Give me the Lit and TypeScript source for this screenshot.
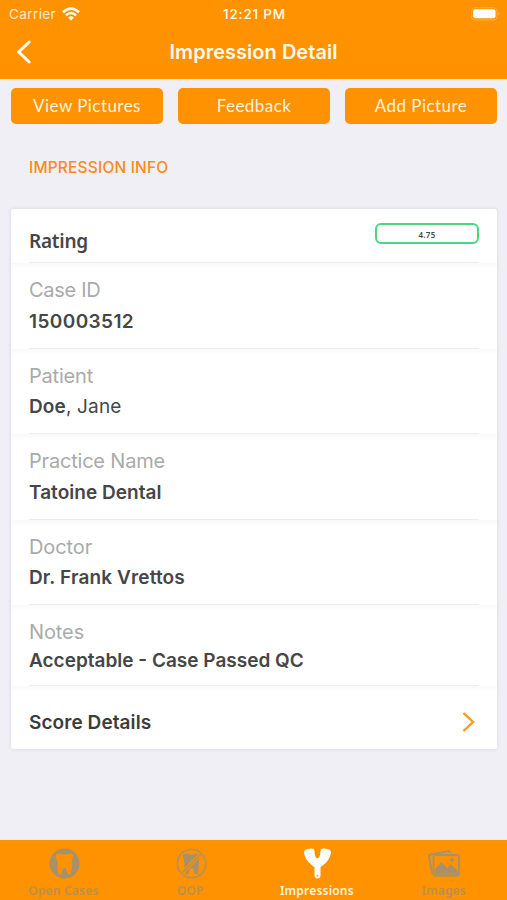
import { LitElement, html, css, svg } from "lit";
import { customElement } from "lit/decorators.js";

const toothPath =
  "M7 5.8C9 4.4 12 6 15 6S21 4.4 23 5.8C24.4 8 22.4 11 22.2 14.5C22.4 18 22 22.5 21 25.8H18.2C17.4 23.5 17.6 19.6 15.1 19.6S12.8 23.5 12 25.8H9.2C8.2 22.5 7.8 18 8 14.5C7.8 11 5.6 8 7 5.8Z";

const icons = {
  cases: svg`<circle cx="15" cy="15" r="15" fill="#a8906a"/><path d=${toothPath} fill="#ff9200"/>`,
  oop: svg`<circle cx="15" cy="15" r="14.2" fill="none" stroke="#b79155" stroke-width="1.7"/>
    <path d=${toothPath} fill="#a8906a"/>
    <path d="M25.4 4.6L4.6 25.4" stroke="#ff9200" stroke-width="3.6"/>
    <path d="M25.4 4.6L4.6 25.4" stroke="#b79155" stroke-width="1.6"/>`,
  impressions: svg`<path fill="#fff" d="M5 .6C7.4-.1 10.4-.2 11.4 .6C12.6 2.6 11.6 9.8 15 9.8S17.4 2.6 18.6 .6C19.6-.2 22.6-.1 25 .6C27.6 1.2 28.8 2.4 28.4 4.6C27.4 10.4 23.4 15.8 18 18.4V27C18 31 12 31 12 27V18.4C6.6 15.8 2.6 10.4 1.6 4.6C1.2 2.4 2.4 1.2 5 .6Z"/>
    <circle cx="15" cy="27.2" r="1.1" fill="#ffb550"/>`,
  images: svg`<g fill="none" stroke="#a8906a" stroke-width="1.8" stroke-linejoin="round">
    <path d="M4.4 25.5L.9 8.3Q.7 6.4 2.5 6L20 2.6Q21.8 2.4 22.6 4.6"/>
    <rect x="5.5" y="6.5" width="25.4" height="20.5" rx="1.5"/></g>
    <path fill="#a8906a" d="M7 26V20.5L13.5 13.5L19 19.5L23 16L29.5 22V26Z"/><circle cx="24" cy="11.5" r="1.9" fill="#a8906a"/>`,
};

@customElement("app-root")
export class AppRoot extends LitElement {
  static styles = css`
    :host {
      display: flex;
      flex-direction: column;
      box-sizing: border-box;
      height: 900px;
      background: #f0eff5;
      font-family: Inter, "Liberation Sans", sans-serif;
      color: #464646;
      overflow: hidden;
    }
    svg { display: block; }
    header { height: 79px; background: #ff9200; color: #fffaf0; flex: none; }
    .status {
      display: grid;
      grid-template-columns: 1fr auto 1fr;
      align-items: center;
      height: 27px;
      padding: 0 7px 0 9px;
      font-size: 13.5px;
    }
    .carrier { display: flex; align-items: center; gap: 6px; letter-spacing: 0.4px; color: #ffe9c6; }
    .time { font-weight: 500; letter-spacing: 0.8px; }
    .battery { justify-self: end; }
    .nav {
      display: grid;
      grid-template-columns: 40px 1fr 40px;
      align-items: center;
      height: 50px;
      padding: 0 15px;
    }
    .title { text-align: center; font-size: 20px; font-weight: 600; letter-spacing: 0.03px; }
    .actions {
      display: grid;
      grid-template-columns: repeat(3, 1fr);
      gap: 15px;
      padding: 9px 10px 0 11px;
      flex: none;
    }
    .action {
      height: 36px;
      border-radius: 5px;
      background: #ff9200;
      color: #fff3dc;
      text-align: center;
      font: 17px/35px Lato, sans-serif;
      letter-spacing: 0.45px;
    }
    .section {
      flex: none;
      height: 85px;
      padding: 34px 29px 0;
      box-sizing: border-box;
      line-height: 20px;
      font-size: 15.5px;
      font-weight: 500;
      letter-spacing: 0.18px;
      color: #f98a1c;
    }
    .card {
      flex: none;
      margin: 0 10px 0 11px;
      border-radius: 3px;
      background: #fff;
      box-shadow: 0 0 4px rgba(0, 0, 0, 0.1);
    }
    .row {
      display: flex;
      flex-direction: column;
      box-sizing: border-box;
      height: 85.5px;
      padding: 15px 18px 0;
      line-height: 25px;
      background: linear-gradient(#f9f9f9, #fff 6px);
    }
    .row::after { content: ""; height: 1px; margin-top: auto; background: #ededef; }
    .label { font-size: 20px; color: #aaa; }
    .value { margin-top: 5.5px; font-size: 19px; font-weight: 600; }
    .light { font-weight: 400; }
    .notes { height: 81px; }
    .notes .value { margin-top: 2.5px; }
    .rating { height: 54px; padding-top: 14px; background: none; }
    .line { display: flex; justify-content: space-between; }
    .name { font: 600 19px/36px "Noto Sans", sans-serif; letter-spacing: -0.25px; }
    .badge {
      box-sizing: border-box;
      width: 104px;
      height: 21px;
      border: 2px solid #4cd581;
      border-radius: 6px;
      text-align: center;
      font: 600 8px/20px "Noto Sans", sans-serif;
      letter-spacing: 0.3px;
    }
    .score {
      height: 63px;
      flex-direction: row;
      align-items: center;
      justify-content: space-between;
      padding: 9px 22px 0 18px;
      font-size: 19px;
      font-weight: 600;
      letter-spacing: 0.08px;
      color: #3c3c3c;
      border-radius: 3px;
    }
    .score::after { display: none; }
    .tabs {
      display: grid;
      grid-template-columns: repeat(4, 1fr);
      box-sizing: border-box;
      height: 60px;
      margin-top: auto;
      padding-top: 8px;
      background: #ff9200;
    }
    .tab {
      display: flex;
      flex-direction: column;
      align-items: center;
      gap: 3px;
      color: #bb904b;
      font: 600 12px/17px "Noto Sans", sans-serif;
      letter-spacing: 0.2px;
    }
    .tab svg { margin-left: 1px; }
    .active { color: #fff3dc; }
  `;

  private field(label: string, value: unknown, tracking: number[], extra = "") {
    return html`<div class="row ${extra}">
      <span class="label" style="letter-spacing:${tracking[0]}px">${label}</span>
      <span class="value" style="letter-spacing:${tracking[1]}px">${value}</span>
    </div>`;
  }

  private tab(name: string, icon: unknown, box: string, active = false) {
    return html`<div class="tab ${active ? "active" : ""}">
      <svg width="32" height="31" viewBox=${box}>${icon}</svg><span>${name}</span>
    </div>`;
  }

  render() {
    return html`
      <header>
        <div class="status">
          <div class="carrier">
            Carrier
            <svg width="18" height="14" viewBox="0 0 18 14" fill="none" stroke="#fffaf0" stroke-width="2.5">
              <path d="M1 5.2Q9-2 17 5.2M3.9 8.3Q9 3.8 14.1 8.3" />
              <path d="M6 10.4Q9 8 12 10.4L9 13.6Z" fill="#fffaf0" stroke="none" />
            </svg>
          </div>
          <div class="time">12:21 PM</div>
          <svg class="battery" width="29" height="14" viewBox="0 0 29 14">
            <rect x="0.6" y="0.6" width="25.5" height="12.4" rx="3.6" fill="none" stroke="#ffb04a" />
            <rect x="2.2" y="2.3" width="22.3" height="9" rx="2" fill="#fff" />
            <path d="M27.4 4.5Q29.4 6.8 27.4 9Z" fill="#ffb04a" />
          </svg>
        </div>
        <div class="nav">
          <svg width="18" height="26" viewBox="0 0 18 26" fill="none" stroke="#fffaf0" stroke-width="3" stroke-linecap="round">
            <path d="M14.2 3L3.8 13L14.2 23" />
          </svg>
          <div class="title">Impression Detail</div>
        </div>
      </header>
      <div class="actions">
        <div class="action">View Pictures</div>
        <div class="action">Feedback</div>
        <div class="action">Add Picture</div>
      </div>
      <div class="section">IMPRESSION INFO</div>
      <div class="card">
        <div class="row rating">
          <div class="line"><span class="name">Rating</span><span class="badge">4.75</span></div>
        </div>
        ${this.field("Case ID", "150003512", [-0.3, 0.4])}
        ${this.field("Patient", html`Doe<span class="light">, Jane</span>`, [-0.2, 0.15])}
        ${this.field("Practice Name", "Tatoine Dental", [-0.2, 0.03])}
        ${this.field("Doctor", "Dr. Frank Vrettos", [-0.1, 0.13])}
        ${this.field("Notes", "Acceptable - Case Passed QC", [-0.1, 0], "notes")}
        <div class="row score">
          <span>Score Details</span>
          <svg width="13" height="22" viewBox="0 0 13 22" fill="none" stroke="#f79a22" stroke-width="2.4">
            <path d="M1.5 2L11 11L1.5 20" />
          </svg>
        </div>
      </div>
      <div class="tabs">
        ${this.tab("Open Cases", icons.cases, "-1.5 -0.5 32 31")}
        ${this.tab("OOP", icons.oop, "-1.5 -0.5 32 31")}
        ${this.tab("Impressions", icons.impressions, "-1.5 -0.5 32 31", true)}
        ${this.tab("Images", icons.images, "0 -0.5 32 31")}
      </div>
    `;
  }
}
